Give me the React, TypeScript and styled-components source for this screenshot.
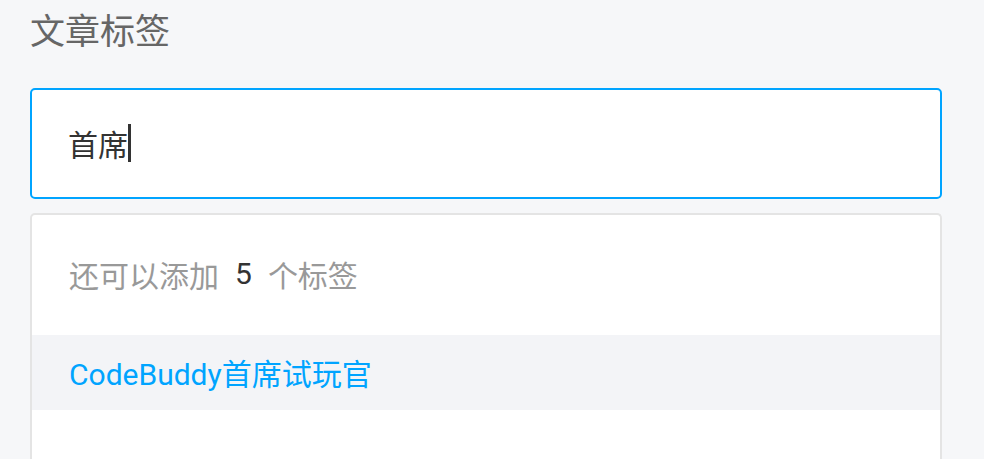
import React from "react";
import styled, { createGlobalStyle } from "styled-components";

const Global = createGlobalStyle`
  html, body { margin: 0; padding: 0; background: #f6f7f9; }
  body { font-family: Roboto, "Noto Sans CJK SC", sans-serif; overflow: hidden; }
`;

const Page = styled.div`
  padding: 0 42px 0 30px;
  height: 459px;
  box-sizing: border-box;
  display: flex;
  flex-direction: column;
`;

const Title = styled.div`
  font-size: 35px;
  line-height: 66px;
  color: #666666;
  height: 66px;
  margin-bottom: 22px;
`;

const InputBox = styled.div`
  height: 111px;
  box-sizing: border-box;
  border: 2px solid #00a4ff;
  border-radius: 5px;
  background: #ffffff;
  display: flex;
  align-items: center;
  padding: 0 0 2px 36px;
  font-size: 30px;
  color: #333333;
`;

const Caret = styled.span`
  display: inline-block;
  width: 3px;
  height: 38px;
  background: #333333;
  margin-left: 0px;
`;

const Dropdown = styled.div`
  margin-top: 14px;
  flex: 1;
  box-sizing: border-box;
  border: 2px solid #e4e4e4;
  border-bottom: none;
  border-radius: 5px 5px 0 0;
  background: #ffffff;
  display: flex;
  flex-direction: column;
`;

const Hint = styled.div`
  height: 120px;
  box-sizing: border-box;
  display: flex;
  align-items: center;
  padding: 0 0 3px 37px;
  font-size: 30px;
  color: #999999;
`;

const Count = styled.span`
  color: #333333;
  margin: 0 16px;
`;

const Option = styled.div<{ $active?: boolean }>`
  height: 75px;
  box-sizing: border-box;
  display: flex;
  align-items: center;
  padding: 0 0 2px 37px;
  font-size: 30px;
  color: #00a4ff;
  background: ${(p) => (p.$active ? "#f3f4f7" : "#ffffff")};
`;

export default function App() {
  return (
    <>
      <Global />
      <Page>
        <Title>文章标签</Title>
        <InputBox>
          首席
          <Caret />
        </InputBox>
        <Dropdown>
          <Hint>
            还可以添加<Count>5</Count>个标签
          </Hint>
          <Option $active>CodeBuddy首席试玩官</Option>
        </Dropdown>
      </Page>
    </>
  );
}
